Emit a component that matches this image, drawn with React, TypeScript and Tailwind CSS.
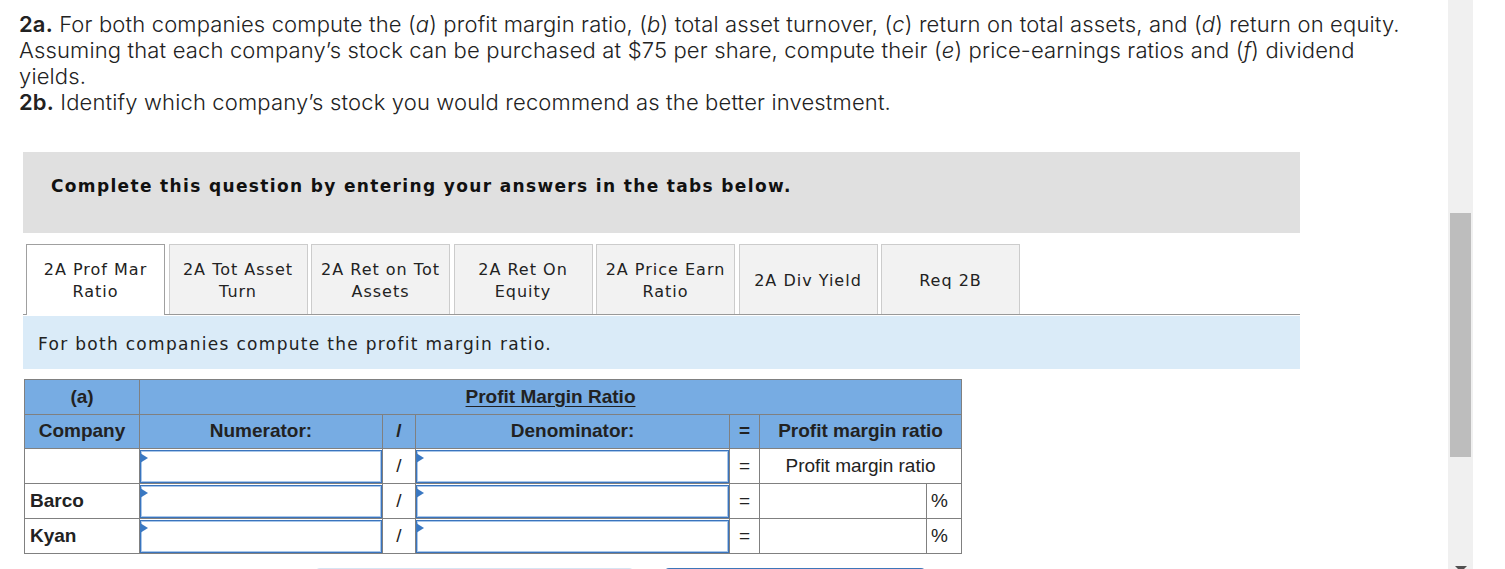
import React from "react";

const para = { fontFamily: "Inter, Lato, sans-serif" };
const verdana = { fontFamily: "'DejaVu Sans', Verdana, sans-serif" };
const arial = { fontFamily: "'Liberation Sans', Arial, sans-serif" };

function Input() {
  return (
    <div className="relative h-[33px] w-full border border-[#3a74bd] bg-white shadow-[inset_0_0_0_1px_#a9c7ea]">
      <div className="absolute left-[-1px] top-[2px] h-0 w-0 border-y-[5px] border-l-[8px] border-y-transparent border-l-[#3a78c2]" />
    </div>
  );
}

const tabs = [
  ["2A Prof Mar", "Ratio"],
  ["2A Tot Asset", "Turn"],
  ["2A Ret on Tot", "Assets"],
  ["2A Ret On", "Equity"],
  ["2A Price Earn", "Ratio"],
  ["2A Div Yield"],
  ["Req 2B"],
];

export default function App() {
  const td = "border border-[#808080] p-0";
  return (
    <div className="flex h-[569px] w-[1505px] overflow-hidden bg-white text-[#222]">
      <div className="w-[1448px] shrink-0">
        <div className="pl-[19px] pt-[11px] text-[22px] font-light leading-[26px] tracking-[0.15px] text-[#222]" style={para}>
          <p>
            <b className="font-semibold">2a.</b> For both companies compute the (<i>a</i>) profit margin ratio, (<i>b</i>) total asset turnover, (<i>c</i>) return on total assets, and (<i>d</i>) return on equity.
            <br />
            Assuming that each company’s stock can be purchased at $75 per share, compute their (<i>e</i>) price-earnings ratios and (<i>f</i>) dividend
            <br />
            yields.
          </p>
          <p>
            <b className="font-semibold">2b.</b> Identify which company’s stock you would recommend as the better investment.
          </p>
        </div>

        <div className="ml-[23px] mt-[37px] h-[81px] w-[1277px] bg-[#e0e0e0] pl-[28px] pt-[24px]">
          <div className="text-[17px] font-bold leading-[20px] tracking-[1.35px] text-[#111]" style={verdana}>
            Complete this question by entering your answers in the tabs below.
          </div>
        </div>

        <div className="ml-[23px] mt-[11px] flex h-[71px] w-[1277px] gap-[3.5px] border-b border-[#999] pl-[3px]" style={verdana}>
          {tabs.map((t, i) => (
            <div
              key={i}
              className={
                i === 0
                  ? "relative z-10 mb-[-1px] flex h-[71px] w-[139px] flex-col items-center justify-center border border-b-0 border-[#a0a0a0] bg-white pt-[2px] text-[16px] leading-[22px] tracking-[1px] text-[#222]"
                  : "flex h-[70px] w-[139px] flex-col items-center justify-center border border-b-0 border-[#cccccc] bg-[#f2f2f2] pt-[2px] text-[16px] leading-[22px] tracking-[1px] text-[#222]"
              }
            >
              {t.map((l, j) => (
                <div key={j}>{l}</div>
              ))}
            </div>
          ))}
        </div>

        <div className="ml-[23px] mt-[1px] flex h-[53px] w-[1277px] items-center bg-[#daebf8] pl-[15px] pt-[5px] text-[17px] tracking-[1.3px] text-[#222]" style={verdana}>
          For both companies compute the profit margin ratio.
        </div>

        <table className="ml-[24px] mt-[10px] w-[937px] table-fixed border-collapse text-[19px] text-[#222]" style={arial}>
          <colgroup>
            <col className="w-[115px]" />
            <col className="w-[243px]" />
            <col className="w-[33px]" />
            <col className="w-[314px]" />
            <col className="w-[30px]" />
            <col className="w-[167px]" />
            <col className="w-[35px]" />
          </colgroup>
          <tbody>
            <tr className="h-[35px] bg-[#77ace3] font-bold">
              <td className={td + " text-center"}>(a)</td>
              <td colSpan={6} className={td + " text-center"}>
                <span className="underline underline-offset-[3px]">Profit Margin Ratio</span>
              </td>
            </tr>
            <tr className="h-[34px] bg-[#77ace3] font-bold">
              <td className={td + " text-center"}>Company</td>
              <td className={td + " text-center"}>Numerator:</td>
              <td className={td + " text-center"}>/</td>
              <td className={td + " text-center"}>Denominator:</td>
              <td className={td + " text-center"}>=</td>
              <td colSpan={2} className={td + " text-center"}>Profit margin ratio</td>
            </tr>
            <tr className="h-[35px]">
              <td className={td}></td>
              <td className={td}><Input /></td>
              <td className={td + " text-center"}>/</td>
              <td className={td}><Input /></td>
              <td className={td + " text-center"}>=</td>
              <td colSpan={2} className={td + " text-center"}>Profit margin ratio</td>
            </tr>
            {["Barco", "Kyan"].map((n) => (
              <tr key={n} className="h-[35px]">
                <td className={td + " pl-[5px] font-bold"}>{n}</td>
                <td className={td}><Input /></td>
                <td className={td + " text-center"}>/</td>
                <td className={td}><Input /></td>
                <td className={td + " text-center"}>=</td>
                <td className={td}></td>
                <td className={td + " pl-[4px] text-left"}>%</td>
              </tr>
            ))}
          </tbody>
        </table>

        <div className="mt-[14px] flex gap-[32px] pl-[316px]">
          <div className="h-[30px] w-[317px] rounded-[4px] border-t-2 border-[#d7e4f2] bg-[#eef3f9]" />
          <div className="h-[30px] w-[260px] rounded-[4px] border-t-2 border-[#3e76b9] bg-[#3e76b9]" />
        </div>
      </div>

      <div className="relative h-[569px] w-[25px] shrink-0 bg-[#f0f0f0]">
        <div className="absolute left-[2px] top-[213px] h-[244px] w-[21px] bg-[#bdbdbd]" />
        <div className="absolute left-[7px] top-[566px] h-0 w-0 border-x-[6px] border-t-[6px] border-x-transparent border-t-[#505050]" />
      </div>
      <div className="flex-1 bg-white" />
    </div>
  );
}
